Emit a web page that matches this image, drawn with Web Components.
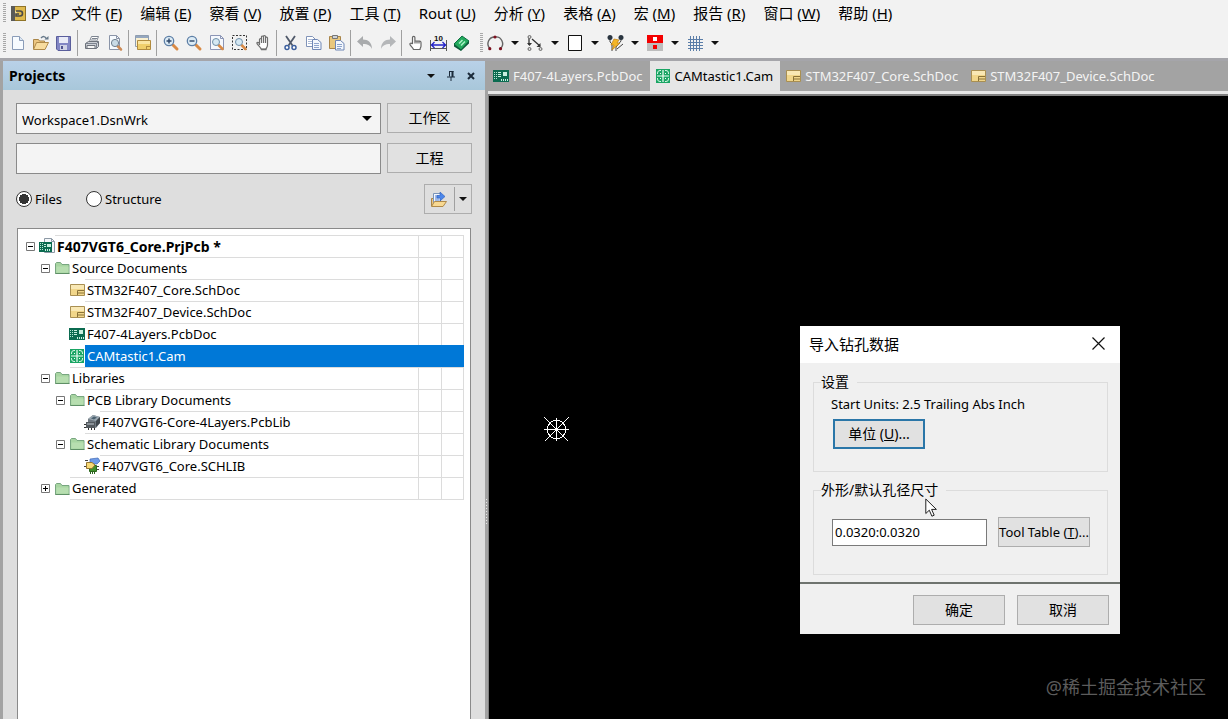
<!DOCTYPE html>
<html lang="zh-CN">
<head>
<meta charset="utf-8">
<title>DXP</title>
<style>
    html, body {
        height: 100%;
        margin: 0;
    }
    body {
        display: flex;
        flex-direction: column;
        background: #a3a3a3;
        color: #000;
        font: 13px/20px "Noto Sans", "Noto Sans CJK SC", sans-serif;
        overflow: hidden;
    }
    .tools {
        display: flex;
        gap: 4px;
        background: #f2f2f2;
    }
    .workspace {
        display: flex;
        flex: 1;
        min-height: 0;
        border-top: 3px solid #a5a5aa;
    }
</style>
</head>
<body>

<template id="menu-bar">
    <style>
        :host {
            display: flex;
            align-items: center;
            gap: 18px;
            box-sizing: border-box;
            height: 28px;
            padding: 0 0 2px 3px;
            background: #f2f2f2;
            font-size: 15px;
            white-space: nowrap;
        }
        tool-grip {
            margin-right: -13px;
        }
        ::slotted(menu-item:first-of-type) {
            margin-right: -6px;
        }
    </style>
    <tool-grip></tool-grip>
    <slot></slot>
</template>

<template id="menu-item">
    <style>
        :host {
            display: block;
        }
        button {
            display: flex;
            align-items: center;
            gap: 5px;
            padding: 0;
            border: 0;
            background: none;
            color: inherit;
            font: inherit;
            white-space: pre;
        }
    </style>
    <button type="button"><slot name="icon"></slot><span><slot></slot></span></button>
</template>

<template id="tool-bar">
    <style>
        :host {
            display: flex;
            align-items: center;
            height: 30px;
            padding-left: 3px;
        }
    </style>
    <slot></slot>
</template>

<template id="tool-grip">
    <style>
        :host {
            display: block;
            flex: none;
            width: 3px;
            height: 20px;
            background: repeating-linear-gradient(#a8a8a8 0 1px, transparent 1px 2px);
        }
    </style>
</template>

<template id="tool-sep">
    <style>
        :host {
            display: block;
            flex: none;
            width: 1px;
            height: 26px;
            margin: 0 2px;
            background: #a0a0a0;
        }
    </style>
</template>

<template id="tool-button">
    <style>
        :host {
            display: flex;
        }
        button {
            display: flex;
            align-items: center;
            justify-content: center;
            width: 23px;
            height: 24px;
            padding: 0;
            border: 0;
            background: none;
        }
        .drop {
            display: none;
        }
        :host([menu]) .main {
            width: 24px;
        }
        :host([menu]) .drop {
            display: flex;
            width: 16px;
        }
    </style>
    <button type="button" class="main"><app-icon></app-icon></button>
    <button type="button" class="drop" aria-label="More"><app-icon name="arrow"></app-icon></button>
</template>

<template id="push-button">
    <style>
        :host {
            display: block;
            font-size: 14px;
        }
        button {
            box-sizing: border-box;
            width: 100%;
            height: 30px;
            padding: 0;
            border: 1px solid #adadad;
            background: #e1e1e1;
            color: inherit;
            font: inherit;
            white-space: nowrap;
        }
        :host([focused]) button {
            border: 2px solid #2a76a8;
        }
    </style>
    <button type="button"><slot></slot></button>
</template>

<template id="project-panel">
    <style>
        :host {
            display: flex;
            flex-direction: column;
            flex: none;
            box-sizing: border-box;
            width: min(482px, 60vw);
            margin-left: 3px;
            background: #dedede;
        }
        header {
            display: flex;
            align-items: center;
            gap: 4px;
            height: 29px;
            padding: 0 6px;
            background: linear-gradient(#b9d1e8, #a8c7da);
        }
        h2 {
            flex: 1;
            margin: 0;
            font-size: 14px;
            line-height: 20px;
        }
        header button {
            display: flex;
            align-items: center;
            justify-content: center;
            width: 16px;
            height: 16px;
            padding: 0;
            border: 0;
            background: none;
        }
        .content {
            display: flex;
            flex-direction: column;
            flex: 1;
            gap: 9px;
            min-height: 0;
            padding: 13px 13px 0;
        }
        .row {
            display: grid;
            grid-template-columns: 1fr 85px;
            gap: 6px;
        }
        .combo {
            display: grid;
            align-items: center;
        }
        .combo > * {
            grid-area: 1 / 1;
        }
        .combo app-icon {
            justify-self: end;
            margin-right: 9px;
            pointer-events: none;
        }
        select, input[type=text] {
            appearance: none;
            box-sizing: border-box;
            width: 100%;
            height: 31px;
            margin: 0;
            padding: 2px 5px 0;
            border: 1px solid #8a8a8a;
            border-radius: 0;
            background: #f4f4f4;
            color: inherit;
            font: inherit;
        }
        .modes {
            display: flex;
            align-items: center;
            gap: 24px;
            padding-top: 1px;
        }
        label {
            display: flex;
            align-items: center;
            gap: 3px;
        }
        input[type=radio] {
            appearance: none;
            box-sizing: border-box;
            width: 16px;
            height: 16px;
            margin: 0;
            border: 1px solid #333;
            border-radius: 50%;
            background: #fff;
        }
        input[type=radio]:checked {
            background: radial-gradient(circle, #333 0 5px, #fff 5px);
        }
        .split {
            display: flex;
            align-items: center;
            box-sizing: border-box;
            height: 30px;
            margin-left: auto;
            border: 1px solid #adadad;
        }
        .split button {
            display: flex;
            align-items: center;
            justify-content: center;
            width: 16px;
            height: 24px;
            padding: 0;
            border: 0;
            background: none;
        }
        .split button:first-child {
            width: 30px;
            padding-right: 3px;
            border-right: 1px solid #a0a0a0;
        }
        .tree {
            flex: 1;
            margin: 5px 1px 0;
            padding: 6px 6px 0 8px;
            border: 1px solid #8a8a8a;
            border-bottom: 0;
            background: #fff;
        }
    </style>
    <header>
        <h2>Projects</h2>
        <button type="button" aria-label="Menu"><app-icon name="arrow"></app-icon></button>
        <button type="button" aria-label="Pin"><app-icon name="pin"></app-icon></button>
        <button type="button" aria-label="Close"><app-icon name="close-small"></app-icon></button>
    </header>
    <div class="content">
        <div class="row">
            <div class="combo">
                <select aria-label="Workspace"><option>Workspace1.DsnWrk</option></select>
                <app-icon name="arrow-big"></app-icon>
            </div>
            <push-button>工作区</push-button>
        </div>
        <div class="row">
            <input type="text" aria-label="Project">
            <push-button>工程</push-button>
        </div>
        <div class="modes">
            <label><input type="radio" name="mode" checked>Files</label>
            <label><input type="radio" name="mode">Structure</label>
            <div class="split">
                <button type="button" aria-label="Open"><app-icon name="import"></app-icon></button>
                <button type="button" aria-label="Open menu"><app-icon name="arrow"></app-icon></button>
            </div>
        </div>
        <div class="tree" role="tree"><slot></slot></div>
    </div>
</template>

<template id="tree-row">
    <style>
        :host {
            display: flex;
            align-items: center;
            height: 22px;
            padding-left: calc(var(--level, 0) * 15px);
            white-space: nowrap;
        }
        :host([level="1"]) { --level: 1; }
        :host([level="2"]) { --level: 2; }
        :host([level="3"]) { --level: 3; }
        .expander {
            flex: none;
            width: 9px;
            height: 9px;
            margin-right: 4px;
        }
        app-icon {
            flex: none;
            width: 16px;
            overflow: visible;
        }
        .label, .cell {
            box-sizing: border-box;
            height: 22px;
            border-top: 1px solid #dcdcdc;
        }
        .label {
            flex: 1;
            padding-left: 2px;
            line-height: 21px;
        }
        .cell {
            flex: none;
            width: 23px;
            border-left: 1px solid #dcdcdc;
        }
        .cell:last-child {
            border-right: 1px solid #dcdcdc;
        }
        :host([bold]) .label {
            font-size: 14px;
            font-weight: bold;
        }
        :host([selected]) .label {
            background: #0078d7;
            border-color: #0078d7;
            color: #fff;
        }
        :host([selected]) .cell {
            background: #0078d7;
            border-color: #0078d7;
        }
        :host(:last-child) .label, :host(:last-child) .cell {
            border-bottom: 1px solid #dcdcdc;
        }
        :host(:last-child) {
            height: 23px;
        }
        :host(:last-child) .label, :host(:last-child) .cell {
            height: 23px;
        }
    </style>
    <app-icon class="expander"></app-icon>
    <app-icon class="kind"></app-icon>
    <span class="label"><slot></slot></span>
    <span class="cell"></span>
    <span class="cell"></span>
</template>

<template id="pane-splitter">
    <style>
        :host {
            display: flex;
            align-items: center;
            justify-content: center;
            width: 3px;
            padding-top: 244px;
            box-sizing: border-box;
            cursor: col-resize;
        }
        span {
            width: 1px;
            height: 26px;
            background: repeating-linear-gradient(#e8e8e8 0 1px, transparent 1px 3px);
        }
    </style>
    <span></span>
</template>

<template id="editor-area">
    <style>
        :host {
            display: flex;
            flex-direction: column;
            flex: 1;
            min-width: 0;
        }
        nav {
            display: flex;
            height: 30px;
            border-bottom: 3px solid #e6e6e6;
        }
        main {
            position: relative;
            flex: 1;
            min-height: 0;
            border-top: 2px solid #808080;
            border-left: 1px solid #808080;
            background: #000;
            overflow: hidden;
        }
    </style>
    <nav><slot name="tab"></slot></nav>
    <main><slot></slot></main>
</template>

<template id="doc-tab">
    <style>
        :host {
            display: block;
        }
        a {
            display: flex;
            align-items: center;
            gap: 4px;
            height: 30px;
            padding: 0 7px 0 5px;
            color: #f4f4f4;
            text-decoration: none;
            white-space: nowrap;
        }
        app-icon {
            width: 16px;
        }
        :host([active]) a {
            background: #e6e6e6;
            color: #000;
        }
    </style>
    <a href="#"><app-icon></app-icon><span><slot></slot></span></a>
</template>

<template id="group-box">
    <style>
        :host {
            display: block;
        }
        fieldset {
            box-sizing: border-box;
            min-width: 0;
            height: 100%;
            margin: 0;
            padding: 0 17px;
            border: 1px solid #dcdcdc;
        }
        legend {
            margin-left: -10px;
            padding: 0 8px 0 0;
            line-height: 20px;
            font-size: 14px;
        }
    </style>
    <fieldset><legend></legend><slot></slot></fieldset>
</template>

<template id="drill-dialog">
    <style>
        :host {
            display: flex;
            flex-direction: column;
            box-sizing: border-box;
            width: 320px;
            background: #f0f0f0;
        }
        header {
            display: flex;
            align-items: center;
            justify-content: space-between;
            box-sizing: border-box;
            height: 37px;
            padding: 0 15px 2px 9px;
            background: #fff;
            font-size: 15px;
        }
        header button {
            display: flex;
            padding: 0;
            border: 0;
            background: none;
        }
        .body {
            display: grid;
            grid-template-columns: minmax(0, 1fr);
            gap: 8px;
            padding: 9px 12px 7px 13px;
        }
        .units {
            height: 100px;
        }
        .units p {
            margin: 2px 0 5px;
        }
        .units push-button, .hole push-button {
            width: 92px;
        }
        .units push-button {
            margin-left: 2px;
        }
        .hole {
            height: 95px;
        }
        .hole push-button {
            font-size: 13px;
        }
        .pair {
            display: flex;
            align-items: center;
            gap: 11px;
            padding-top: 17px;
        }
        input {
            box-sizing: border-box;
            flex: 1;
            min-width: 0;
            height: 27px;
            margin-left: 1px;
            padding: 0 2px;
            border: 1px solid #7a7a7a;
            background: #fff;
            color: inherit;
            font: inherit;
        }
        footer {
            display: flex;
            justify-content: flex-end;
            gap: 12px;
            padding: 11px 11px 9px;
            border-top: 2px solid #6e736e;
        }
        footer push-button {
            width: 92px;
        }
    </style>
    <header>
        <span>导入钻孔数据</span>
        <button type="button" aria-label="Close"><app-icon name="close"></app-icon></button>
    </header>
    <div class="body">
        <group-box class="units" legend="设置">
            <p>Start Units: 2.5 Trailing Abs Inch</p>
            <push-button focused>单位 (<u>U</u>)...</push-button>
        </group-box>
        <group-box class="hole" legend="外形/默认孔径尺寸">
            <div class="pair">
                <input type="text" value="0.0320:0.0320" aria-label="外形/默认孔径尺寸">
                <push-button>Tool Table (<u>T</u>)...</push-button>
            </div>
        </group-box>
    </div>
    <footer>
        <push-button>确定</push-button>
        <push-button>取消</push-button>
    </footer>
</template>

<template id="cam-canvas">
    <style>
        :host {
            display: block;
            height: 100%;
        }
        .origin, .pointer, drill-dialog, .watermark {
            position: absolute;
        }
        .origin {
            left: 55px;
            top: 321px;
        }
        drill-dialog {
            right: 108px;
            top: 230px;
        }
        .pointer {
            right: 290px;
            top: 402px;
        }
        .watermark {
            right: 22px;
            bottom: 20px;
            color: #5c5c5c;
            font-size: 18px;
            line-height: 24px;
        }
    </style>
    <app-icon class="origin" name="origin"></app-icon>
    <drill-dialog role="dialog"></drill-dialog>
    <app-icon class="pointer" name="pointer"></app-icon>
    <span class="watermark">@稀土掘金技术社区</span>
</template>

<menu-bar>
    <menu-item><app-icon slot="icon" name="dxp"></app-icon>D<u>X</u>P</menu-item>
    <menu-item>文件 (<u>F</u>)</menu-item>
    <menu-item>编辑 (<u>E</u>)</menu-item>
    <menu-item>察看 (<u>V</u>)</menu-item>
    <menu-item>放置 (<u>P</u>)</menu-item>
    <menu-item>工具 (<u>T</u>)</menu-item>
    <menu-item>Rout (<u>U</u>)</menu-item>
    <menu-item>分析 (<u>Y</u>)</menu-item>
    <menu-item>表格 (<u>A</u>)</menu-item>
    <menu-item>宏 (<u>M</u>)</menu-item>
    <menu-item>报告 (<u>R</u>)</menu-item>
    <menu-item>窗口 (<u>W</u>)</menu-item>
    <menu-item>帮助 (<u>H</u>)</menu-item>
</menu-bar>

<div class="tools">
    <tool-bar>
        <tool-grip></tool-grip>
        <tool-button icon="new" label="New"></tool-button>
        <tool-button icon="open" label="Open"></tool-button>
        <tool-button icon="save" label="Save"></tool-button>
        <tool-sep></tool-sep>
        <tool-button icon="print" label="Print"></tool-button>
        <tool-button icon="preview" label="Preview"></tool-button>
        <tool-sep></tool-sep>
        <tool-button icon="sheets" label="Documents"></tool-button>
        <tool-sep></tool-sep>
        <tool-button icon="zoom-in" label="Zoom in"></tool-button>
        <tool-button icon="zoom-out" label="Zoom out"></tool-button>
        <tool-button icon="zoom-page" label="Fit document"></tool-button>
        <tool-button icon="zoom-area" label="Fit area"></tool-button>
        <tool-button icon="hand" label="Pan"></tool-button>
        <tool-sep></tool-sep>
        <tool-button icon="cut" label="Cut"></tool-button>
        <tool-button icon="copy" label="Copy"></tool-button>
        <tool-button icon="paste" label="Paste"></tool-button>
        <tool-sep></tool-sep>
        <tool-button icon="undo" label="Undo"></tool-button>
        <tool-button icon="redo" label="Redo"></tool-button>
        <tool-sep></tool-sep>
        <tool-button icon="finger" label="Select"></tool-button>
        <tool-button icon="measure" label="Measure"></tool-button>
        <tool-button icon="layers" label="Layers"></tool-button>
    </tool-bar>
    <tool-bar>
        <tool-grip></tool-grip>
        <tool-button menu icon="arc" label="Arc"></tool-button>
        <tool-button menu icon="nodes" label="Nodes"></tool-button>
        <tool-button menu icon="square" label="Rectangle"></tool-button>
        <tool-button menu icon="flash" label="Flash"></tool-button>
        <tool-button menu icon="pad" label="Pad"></tool-button>
        <tool-button menu icon="grid" label="Grid"></tool-button>
    </tool-bar>
</div>

<div class="workspace">
    <project-panel>
        <tree-row level="0" icon="project" open="true" bold>F407VGT6_Core.PrjPcb *</tree-row>
        <tree-row level="1" icon="folder" open="true">Source Documents</tree-row>
        <tree-row level="2" icon="sch">STM32F407_Core.SchDoc</tree-row>
        <tree-row level="2" icon="sch">STM32F407_Device.SchDoc</tree-row>
        <tree-row level="2" icon="pcb">F407-4Layers.PcbDoc</tree-row>
        <tree-row level="2" icon="cam" selected>CAMtastic1.Cam</tree-row>
        <tree-row level="1" icon="folder" open="true">Libraries</tree-row>
        <tree-row level="2" icon="folder" open="true">PCB Library Documents</tree-row>
        <tree-row level="3" icon="pcblib">F407VGT6-Core-4Layers.PcbLib</tree-row>
        <tree-row level="2" icon="folder" open="true">Schematic Library Documents</tree-row>
        <tree-row level="3" icon="schlib">F407VGT6_Core.SCHLIB</tree-row>
        <tree-row level="1" icon="folder" open="false">Generated</tree-row>
    </project-panel>
    <pane-splitter></pane-splitter>
    <editor-area>
        <doc-tab slot="tab" icon="pcb">F407-4Layers.PcbDoc</doc-tab>
        <doc-tab slot="tab" icon="cam" active>CAMtastic1.Cam</doc-tab>
        <doc-tab slot="tab" icon="sch">STM32F407_Core.SchDoc</doc-tab>
        <doc-tab slot="tab" icon="sch">STM32F407_Device.SchDoc</doc-tab>
        <cam-canvas></cam-canvas>
    </editor-area>
</div>

<script>
// [width, height, svg content]
const LENS = '<path d="M10 10l4 4" stroke="#d98a45" stroke-width="3" stroke-linecap="round"/><circle cx="6" cy="6" r="4.7" fill="#dcebf5" stroke="#5d7fa6" stroke-width="1.3"/>';
const SMALL_LENS = '<path d="M9.500 10l4 4" stroke="#d98a45" stroke-width="2.500" stroke-linecap="round"/><circle cx="7" cy="7" r="3.500" fill="#d5e8f3" stroke="#6f8fa8"/>';
const ICONS = {
    'arrow': [8, 4, '<path d="M0 0h8L4 4z" fill="#111"/>'],
    'arrow-big': [10, 5, '<path d="M0 0h10L5 5z" fill="#000"/>'],
    'pin': [8, 10, '<path d="M2 .5h4.500M2.500 0v5.500M5.500 0v5.500M0 6h8M4 6v4" stroke="#1b2a3a" fill="none"/><path d="M4.500 0H6.500v6h-2z" fill="#1b2a3a"/>'],
    'close-small': [8, 8, '<path d="M1 1l6 6M7 1L1 7" stroke="#1b2a3a" stroke-width="2"/>'],
    'close': [13, 13, '<path d="M.5 .5l12 12M12.500 .5l-12 12" stroke="#111" stroke-width="1.200"/>'],
    'plus': [9, 9, '<path d="M.5 .5h8v8h-8z" fill="#fff" stroke="#777"/><path d="M2 4.500h5M4.500 2v5" stroke="#000"/>'],
    'minus': [9, 9, '<path d="M.5 .5h8v8h-8z" fill="#fff" stroke="#777"/><path d="M2 4.500h5" stroke="#000"/>'],
    'none': [9, 9, ''],
    'dxp': [15, 15, '<path d="M0 0h15v15H0z" fill="#8f7327"/><path d="M3 1h11v13H3z" fill="#dfb94c"/><path d="M0 0h4v15H0z" fill="#5a5a58"/><path d="M4 5h2v5H4z" fill="#f0d88c"/><path d="M5 5h4a2.500 2.500 0 010 5H5V8h3" fill="none" stroke="#4a4a48" stroke-width="1.600"/>'],
    'new': [16, 16, '<path d="M2.500 1.500h7l4 4v9h-11z" fill="#f7fbff" stroke="#8a9cb8"/><path d="M9.500 1.500v4h4" fill="#dbe6f2" stroke="#8a9cb8"/>'],
    'open': [17, 16, '<path d="M1.500 14V4.500h5l1 1.500h5v3" fill="#ecc681" stroke="#a98548"/><path d="M1.500 14.500l3-7h12l-3.500 7z" fill="#f8dc9e" stroke="#b08a4a"/><path d="M9 3c2-2 4-2 5.500 1" fill="none" stroke="#67798a" stroke-width="1.500"/><path d="M12.500 4.500h4V1z" fill="#67798a"/>'],
    'save': [15, 15, '<path d="M.5 .5h14v14H2l-1.500-1.500z" fill="#8286c4" stroke="#5a5e9c"/><path d="M3 1h9v6H3z" fill="#e9ebf7"/><path d="M4 9h7v5H4z" fill="#cfd2e6"/><path d="M5 10h2v3H5z" fill="#4e528f"/>'],
    'print': [16, 16, '<path d="M5.500 6.500l2-5h7l-2 5z" fill="#fff" stroke="#7d8490"/><path d="M1.500 8.500l3-2h10v5l-2 2h-11z" fill="#cdd0d6" stroke="#6d727b"/><path d="M1.500 8.500h11v5M12.500 8.500l2-2M8 3.500h5M7 5h5" stroke="#7d8490" fill="none"/><path d="M3 10.500h8v3H3z" fill="#f5f5f5" stroke="#6d727b"/>'],
    'preview': [16, 16, '<path d="M2.500 .5h7l3 3v11h-10z" fill="#f7fbff" stroke="#8a94a8"/><path d="M9.500 .5v3h3" fill="none" stroke="#8a94a8"/><path d="M10.500 11l3.500 3.500" stroke="#cc8a55" stroke-width="2.500" stroke-linecap="round"/><circle cx="8" cy="8" r="3.600" fill="#c9dbe6" stroke="#6f7f8f"/>'],
    'sheets': [16, 16, '<path d="M.5 .5h13v11H.5z" fill="#faf0d0" stroke="#8e9db0"/><path d="M1 1h12v2H1z" fill="#95a7bf"/><path d="M2.500 5.500h13v9h-13z" fill="#f0cf6b" stroke="#b18b3e"/><path d="M3 6h12v3H3z" fill="#fae6a3"/><path d="M11 11.500h4M11.500 11v3" stroke="#b18b3e"/>'],
    'zoom-in': [16, 16, LENS + '<path d="M3.500 6h5M6 3.500v5" stroke="#2c4568" stroke-width="1.400"/>'],
    'zoom-out': [16, 16, LENS + '<path d="M3.500 6h5" stroke="#2c4568" stroke-width="1.400"/>'],
    'zoom-page': [16, 16, '<path d="M1.500 .5h10l3 3v11h-13z" fill="#f5f8fd" stroke="#8b95b5"/><path d="M11.500 .5v3h3" fill="none" stroke="#8b95b5"/>' + SMALL_LENS],
    'zoom-area': [16, 16, '<path d="M.5 .5h14v14H.5z" fill="none" stroke="#333" stroke-dasharray="2 1.500"/>' + SMALL_LENS],
    'hand': [14, 16, '<path d="M3.500 10V4.500a1 1 0 012 0V2a1 1 0 012 0v-.5a1 1 0 012 0V3a1 1 0 012 .3V10c0 2-1 2.500-1.500 4H5c0-1.500-3.500-4-4-5.500s1.200-1.500 2.500 0M5.500 4.500V8M7.500 2v6M9.500 2.500V8" fill="#fff" stroke="#6e6e6e" stroke-width="1.200"/><path d="M5 14.500h5.500" stroke="#6e6e6e" stroke-width="1.500"/>'],
    'cut': [13, 16, '<path d="M2 1l6.500 9.500M11 1L4.500 10.500" stroke="#50596a" stroke-width="1.800"/><circle cx="3" cy="12.500" r="2" fill="#fff" stroke="#3c5f9e" stroke-width="1.500"/><circle cx="10" cy="12.500" r="2" fill="#fff" stroke="#3c5f9e" stroke-width="1.500"/>'],
    'copy': [16, 16, '<path d="M.5 1.500h6l3 3v7h-9z" fill="#fff" stroke="#8093b8"/><path d="M2 4.500h4M2 6.500h5M2 8.500h4" stroke="#a9b9d5"/><path d="M6.500 4.500h5l3.500 3v7H6.500z" fill="#f3f7fd" stroke="#6f86b5"/><path d="M8 8.500h5M8 10.500h5M8 12.500h5" stroke="#8ea4cc"/>'],
    'paste': [16, 16, '<path d="M.5 1.500h11v12H.5z" fill="#e9c77d" stroke="#a9854a"/><path d="M3.500 .5h5v3h-5z" fill="#cfd3d8" stroke="#777"/><path d="M6.500 5.500h5l3.500 3v6.500H6.500z" fill="#f3f7fd" stroke="#6f86b5"/><path d="M8 9.500h5M8 11.500h5M8 13.500h4" stroke="#8ea4cc"/>'],
    'undo': [16, 14, '<path d="M0 5.500L6 0v3.500c5 0 9 3 9 9.500-1.500-3.500-4-5-9-5V11z" fill="#a9abad"/>'],
    'redo': [16, 14, '<path d="M16 5.500L10 0v3.500c-5 0-9 3-9 9.500 1.500-3.500 4-5 9-5V11z" fill="#b5b7b9"/>'],
    'finger': [13, 16, '<path d="M3.500 9V2.500a1.200 1.200 0 012.400 0V6h4.600q1.500 0 1.500 1.500V11c0 1.500-1 2-1 3.500H4.500C4 12.500 1.500 11 1 9.500S2.300 7.800 3.500 9M6 6v2.500M8 6v2.500M10 6v2.500" fill="#fff" stroke="#666" stroke-width="1.200"/>'],
    'measure': [17, 16, '<path d="M.5 5v11M16.500 5v11M0 13.500h17" stroke="#555"/><path d="M1 10h15M4.500 7L1.500 10l3 3M12.500 7l3 3-3 3" fill="none" stroke="#2323c8" stroke-width="1.300"/><text x="4" y="6" font-family="Liberation Sans" font-size="8" font-weight="bold" fill="#111">10</text>'],
    'layers': [17, 16, '<path d="M1 9L9 1l7 5-8 9z" fill="#22a95c" stroke="#0e6f42"/><path d="M1 9v2.500L8 16v-1.500zM8 14.500V16l8-7.500V6z" fill="#0b5b3a"/><path d="M6 8.500L9.500 5M8 10.500L12 6.500" stroke="#a9f0c6" stroke-width="1.600"/>'],
    'arc': [16, 16, '<path d="M3 13.500A6.700 6.700 0 018 2a6.700 6.700 0 015.500 11.500" fill="none" stroke="#666" stroke-width="1.400"/><circle cx="8" cy="2" r="1.600" fill="#7d1220"/><circle cx="2.800" cy="13.700" r="1.600" fill="#7d1220"/><circle cx="13.500" cy="13.700" r="1.600" fill="#7d1220"/>'],
    'nodes': [16, 16, '<path d="M2 3v7M5 4l8 7" stroke="#333" stroke-width="1.300"/><path d="M0 8l2.500 3L5 8zM13.500 8v4h-4z" fill="#333"/><circle cx="2.500" cy="2" r="1.500" fill="#ddd" stroke="#666"/><circle cx="2.500" cy="14" r="1.500" fill="#ddd" stroke="#666"/><circle cx="13.500" cy="14" r="1.500" fill="#ddd" stroke="#666"/>'],
    'square': [14, 16, '<path d="M.5 .5h13v15H.5z" fill="#fff" stroke="#111"/>'],
    'flash': [17, 16, '<path d="M3 3v4l2 2v7M14 3v3l-5 6v4M10 14l6-5" fill="none" stroke="#444"/><circle cx="3" cy="2.500" r="2.500" fill="#2a3540"/><circle cx="14" cy="2.500" r="2.500" fill="#2a3540"/><path d="M7 4l5 1-2 3h3l-8 7 2-5H4z" fill="#f5b626" stroke="#c07f12" stroke-width=".7"/>'],
    'pad': [16, 16, '<path d="M0 0h16v8H0z" fill="#f40000"/><path d="M0 8h16v8H0z" fill="#bdbdbd"/><path d="M6 2h4v4H6z" fill="#fff"/><path d="M6 10h4v4H6z" fill="#f40000"/>'],
    'grid': [15, 15, '<path d="M2.500 0v15M5.500 0v15M8.500 0v15M11.500 0v15M0 3.500h15M0 6.500h15M0 9.500h15M0 12.500h15" stroke="#5a7da8"/>'],
    'import': [17, 16, '<path d="M1.500 15V7.500h3V6h3v9" fill="#ecc681" stroke="#a98548"/><path d="M3.500 2.500h7v9h-7z" fill="#f3f8ff" stroke="#7b94b8"/><path d="M5 5h4M5 7h4M5 9h4" stroke="#4a7ad0"/><path d="M7 4.500h3V1l5 4.500-5 4.500V7H7z" fill="#4b86ea" stroke="#2c5cb8" stroke-width=".6"/><path d="M1.500 15.500l3-5h12l-3.500 5z" fill="#f8d992" stroke="#b08a4a"/>'],
    'folder': [15, 12, '<path d="M.5 11.500v-10l1-1h4l1.500 2h7v9z" fill="#a8d5a2" stroke="#78a680"/><path d="M1.500 4.500h12v6h-12z" fill="#b7deb0"/><path d="M.5 11.500h14" stroke="#5f8f66"/>'],
    'sch': [15, 12, '<path d="M.5 .5h14v11H.5z" fill="#f1d68a" stroke="#a98f52"/><path d="M1 1h13v4H1z" fill="#f9e8b4"/><path d="M7.500 11V6.500H14M8 9h6" stroke="#8a7238" fill="none"/>'],
    'pcb': [16, 12, '<path d="M0 0h16v12H0z" fill="#0b6b50"/><path d="M1.500 2v8M3.500 2v8" stroke="#b6e6d4" stroke-dasharray="1 1"/><path d="M5 2h3v1H5zM5 4h3v1H5zM5 6h3v1H5zM10 2h4v4h-4zM8 9h1v2H8zM10 9h1v2h-1zM12 9h1v2h-1zM14 9h1v2h-1z" fill="#c9efe0"/>'],
    'cam': [14, 14, '<path d="M0 0h14v14H0z" fill="#1aa564"/><path d="M7 1v12M1 7h12" stroke="#f0fff7" stroke-width="1.200"/><path d="M5 1.500H4A2.500 2.500 0 001.500 4v1M9 1.500h1A2.500 2.500 0 0112.500 4v1M1.500 9v1A2.500 2.500 0 004 12.500h1M12.500 9v1a2.500 2.500 0 01-2.500 2.500H9" fill="none" stroke="#d5f7e5"/><path d="M4 4h1v1H4zM9 4h1v1H9zM4 9h1v1H4zM9 9h1v1H9z" fill="#f0fff7"/>'],
    'project': [16, 16, '<path d="M5.500 .5h7l3 3v11h-10z" fill="#f5f8fb" stroke="#8d99a5"/><path d="M12.500 .5v3h3" fill="none" stroke="#8d99a5"/><path d="M0 4h13v10H0z" fill="#0b6b50"/><path d="M1.500 5v8M3.500 5v8" stroke="#b6e6d4" stroke-dasharray="1 1"/><path d="M5 6h2v1H5zM5 8h2v1H5zM8 6h4v3H8zM6 11h1v2H6zM8 11h1v2H8zM10 11h1v2h-1z" fill="#c9efe0"/>'],
    'pcblib': [16, 15, '<path d="M4 4l5-4 7 2v6l-4 5-8-2z" fill="#6f7880"/><path d="M4 4l5-4 7 2-4 4z" fill="#9aa7b0"/><path d="M7 3.500l3-2 3 1-3 2z" fill="#4b6170"/><path d="M12 6l4-4v6l-4 4z" fill="#3f464c"/><path d="M2 7h9v6H2z" fill="#53595e"/><path d="M3 8h7v2H3z" fill="#8b9298"/><path d="M0 9.500h2M0 12.500h2M4.500 13v2M7.500 13v2M10.500 13v2" stroke="#333"/>'],
    'schlib': [16, 16, '<path d="M6 1l8-1 2 3-3 3H6z" fill="#6f9be8" stroke="#3f68b5" stroke-width=".7"/><path d="M1 2.500h3M0 8.500h2M12 8.500h3M12 11.500h3" stroke="#444"/><path d="M5.500 7.500h7v6h-7z" fill="#3f8f2c" stroke="#2b661d"/><path d="M6.500 14v2M8.500 14v2M10.500 14v2" stroke="#2b661d"/><path d="M2.500 4.500h5.500l3 2.500-3 3.500H2.500z" fill="#f7d976" stroke="#957530"/>'],
    'origin': [25, 25, '<g fill="none" stroke="#fff" shape-rendering="crispEdges"><path d="M12.500 1v23M0 12.500h25M.5 .5l24 24M24.500 .5L.5 24.500"/><path d="M9.500 3.500h6l3 2 3 4v6l-3 4-3 2h-6l-3-2-3-4v-6l3-4z"/></g>'],
    'pointer': [13, 19, '<path d="M.8 1v14.500l3.500-3.300 2.600 6 2.300-1-2.600-5.800h4.800z" fill="#fff" stroke="#222"/>']
};

// every element clones the template that carries its own tag name
class TemplateElement extends HTMLElement {
    constructor() {
        super();
        const shadow = this.attachShadow({mode: 'open'});
        shadow.appendChild(document.getElementById(this.localName).content.cloneNode(true));
    }
}

class AppIcon extends HTMLElement {
    constructor() {
        super();
        this.attachShadow({mode: 'open'});
    }

    static get observedAttributes() {
        return ['name'];
    }

    attributeChangedCallback(attrName, oldValue, newValue) {
        const [w, h, shapes] = ICONS[newValue];
        this.shadowRoot.innerHTML = `
            <style>
                :host { display: flex; flex: none; justify-content: center; }
                svg { display: block; flex: none; overflow: visible; }
            </style>
            <svg width="${w}" height="${h}" viewBox="0 0 ${w} ${h}" aria-hidden="true">${shapes}</svg>`;
    }
}

class ToolButton extends TemplateElement {
    connectedCallback() {
        const main = this.shadowRoot.querySelector('.main');
        main.setAttribute('aria-label', this.getAttribute('label'));
        main.firstElementChild.setAttribute('name', this.getAttribute('icon'));
    }
}

class TreeRow extends TemplateElement {
    connectedCallback() {
        const open = this.getAttribute('open');
        const expander = open === null ? 'none' : open === 'true' ? 'minus' : 'plus';
        this.shadowRoot.querySelector('.expander').setAttribute('name', expander);
        this.shadowRoot.querySelector('.kind').setAttribute('name', this.getAttribute('icon'));
        this.setAttribute('role', 'treeitem');
    }
}

class DocTab extends TemplateElement {
    connectedCallback() {
        this.shadowRoot.querySelector('app-icon').setAttribute('name', this.getAttribute('icon'));
    }
}

class GroupBox extends TemplateElement {
    connectedCallback() {
        this.shadowRoot.querySelector('legend').textContent = this.getAttribute('legend');
    }
}

customElements.define('app-icon', AppIcon);
customElements.define('tool-grip', class extends TemplateElement {});
customElements.define('tool-sep', class extends TemplateElement {});
customElements.define('tool-button', ToolButton);
customElements.define('tool-bar', class extends TemplateElement {});
customElements.define('menu-item', class extends TemplateElement {});
customElements.define('menu-bar', class extends TemplateElement {});
customElements.define('push-button', class extends TemplateElement {});
customElements.define('tree-row', TreeRow);
customElements.define('project-panel', class extends TemplateElement {});
customElements.define('pane-splitter', class extends TemplateElement {});
customElements.define('doc-tab', DocTab);
customElements.define('group-box', GroupBox);
customElements.define('drill-dialog', class extends TemplateElement {});
customElements.define('cam-canvas', class extends TemplateElement {});
customElements.define('editor-area', class extends TemplateElement {});
</script>
</body>
</html>
